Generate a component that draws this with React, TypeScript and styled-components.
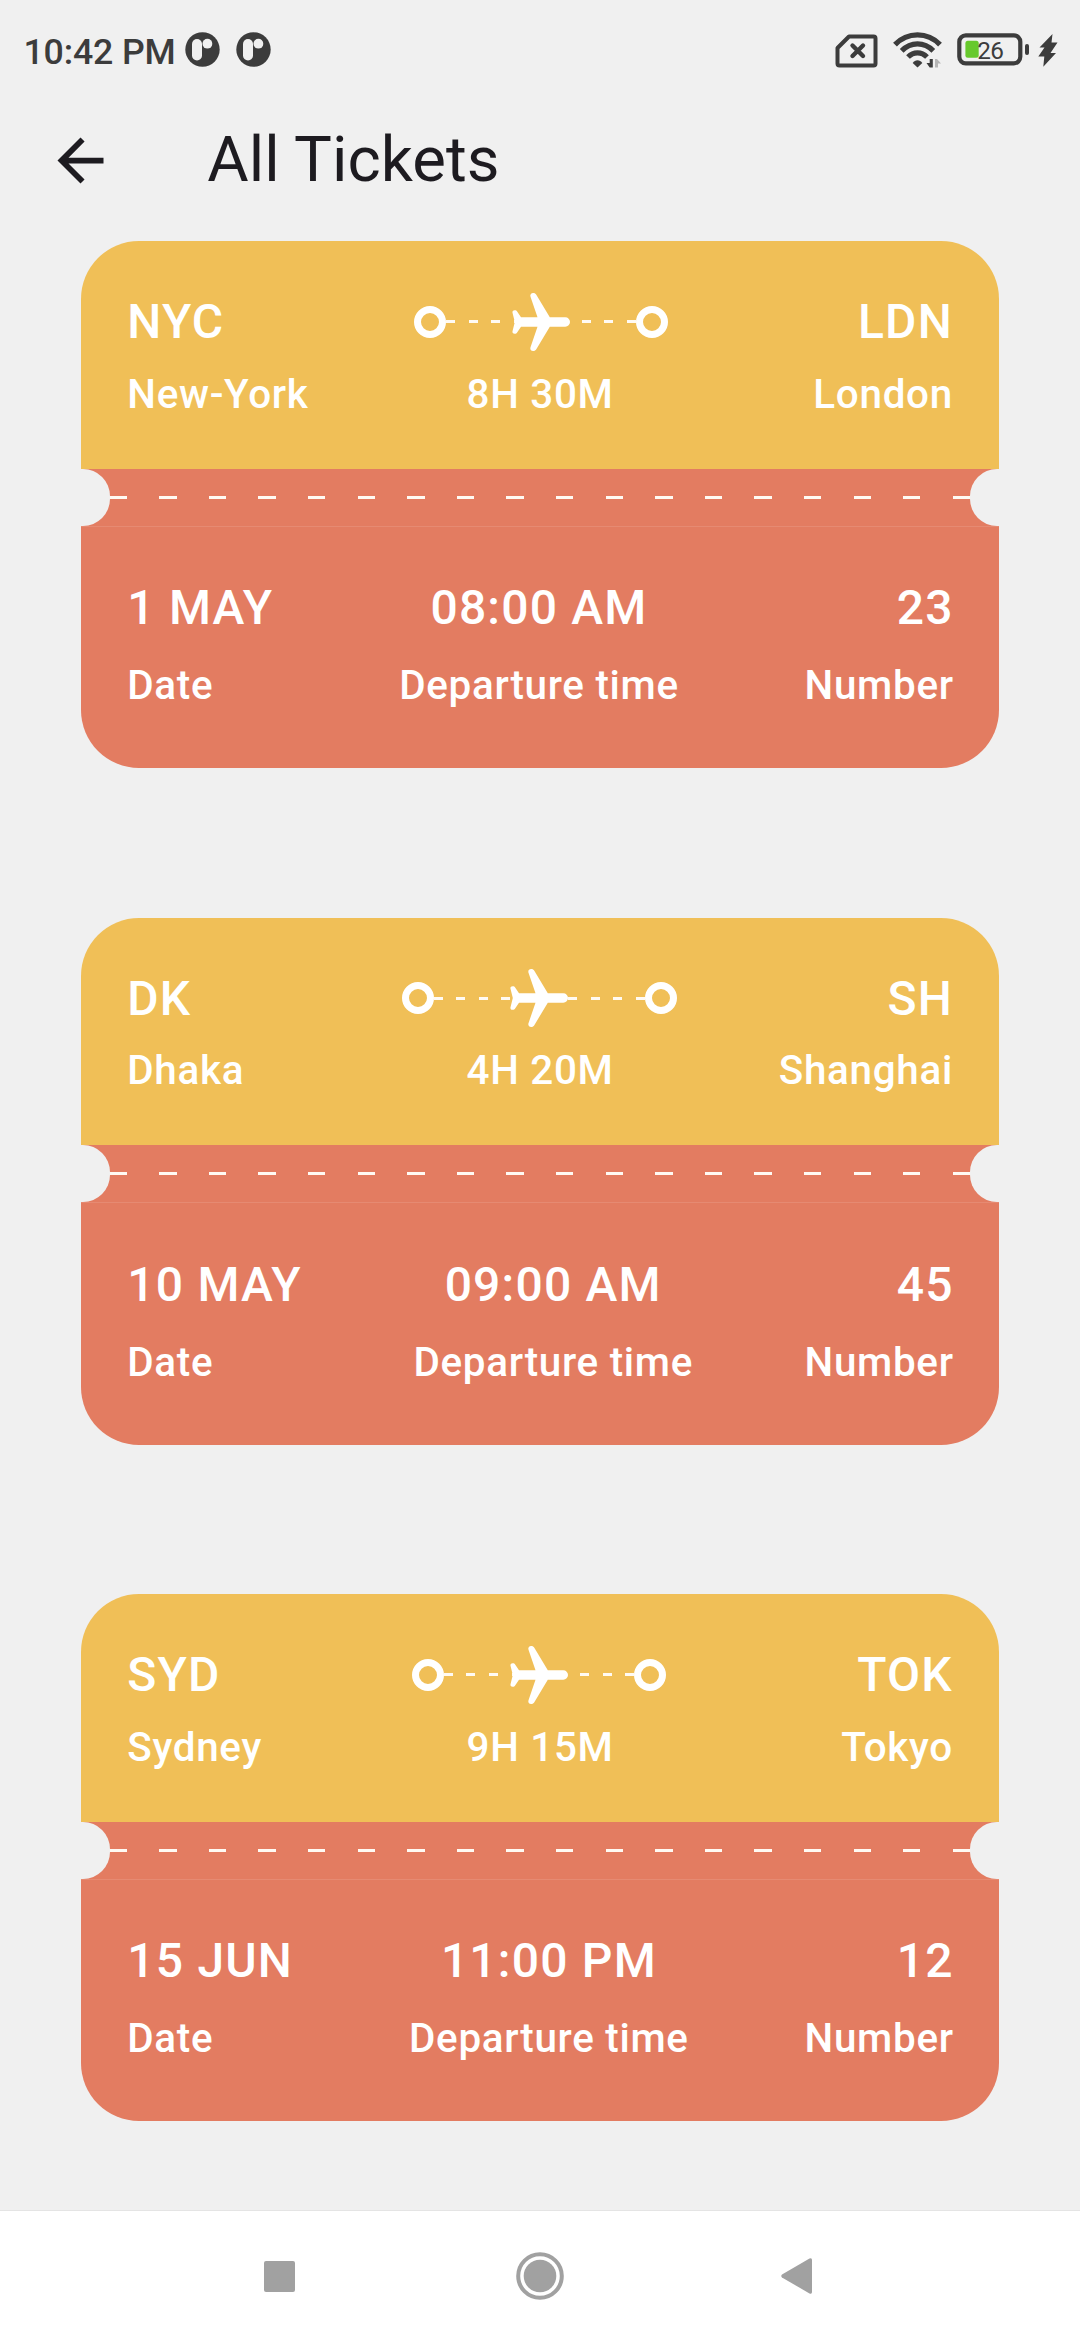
import React from 'react';
import styled, { createGlobalStyle } from 'styled-components';

const colors = {
  page: '#f0f0f0',
  yellow: '#f0bf57',
  coral: '#e37c61',
  seam: '#e68a72',
  status: '#3c3c3c',
  ink: '#1d1b20',
  nav: '#a1a1a1',
};

interface Ticket {
  from: string;
  fromName: string;
  to: string;
  toName: string;
  duration: string;
  date: string;
  time: string;
  number: string;
  dashes: number;
}

const tickets: Ticket[] = [
  { from: 'NYC', fromName: 'New-York', to: 'LDN', toName: 'London', duration: '8H 30M', date: '1 MAY', time: '08:00 AM', number: '23', dashes: 9 },
  { from: 'DK', fromName: 'Dhaka', to: 'SH', toName: 'Shanghai', duration: '4H 20M', date: '10 MAY', time: '09:00 AM', number: '45', dashes: 10 },
  { from: 'SYD', fromName: 'Sydney', to: 'TOK', toName: 'Tokyo', duration: '9H 15M', date: '15 JUN', time: '11:00 PM', number: '12', dashes: 9 },
];

const GlobalStyle = createGlobalStyle`
  * { box-sizing: border-box; }
  body {
    margin: 0;
    background: ${colors.page};
    font-family: Roboto, "Liberation Sans", sans-serif;
  }
`;

const Screen = styled.div`
  display: flex;
  flex-direction: column;
  width: 1080px;
  height: 2340px;
  overflow: hidden;
  background: ${colors.page};
`;

const StatusBar = styled.header`
  display: flex;
  justify-content: space-between;
  height: 100px;
  flex: none;
  padding: 0 22px 0 23.4px;
  color: ${colors.status};
`;

const StatusGroup = styled.div<{ $gap: number }>`
  display: flex;
  align-items: center;
  height: 100px;
  gap: ${(p) => p.$gap}px;
`;

const Clock = styled.span`
  width: 145.6px;
  font-size: 35.7px;
  line-height: 44px;
  font-weight: 500;
  letter-spacing: -0.15px;
  white-space: nowrap;
  padding-top: 3px;
`;

const Glyph = styled.svg<{ $drop?: number }>`
  display: block;
  flex: none;
  margin-top: ${(p) => (p.$drop ?? 0) * 2}px;
`;

const Power = styled.div`
  display: flex;
  align-items: center;
  gap: 8.6px;
`;

const AppBar = styled.div`
  display: flex;
  align-items: center;
  height: 120px;
  flex: none;
  padding-left: 46px;
`;

const Title = styled.h1`
  margin: 0 0 0 92.3px;
  color: ${colors.ink};
  font-size: 63.5px;
  line-height: 76px;
  font-weight: 400;
  white-space: nowrap;
`;

const List = styled.main`
  display: flex;
  flex-direction: column;
  flex: 1;
  gap: 149.7px;
  padding: 21.3px 81px 0;
`;

const Card = styled.article`
  display: flex;
  flex-direction: column;
  height: 526.8px;
  flex: none;
  color: #fff;
`;

const Route = styled.section`
  display: flex;
  flex-direction: column;
  gap: 16px;
  height: 227.4px;
  padding: 47.3px 46.1px 0 46.3px;
  border-radius: 58px 58px 0 0;
  background: ${colors.yellow};
`;

const RouteRow = styled.div`
  display: flex;
  align-items: center;
  height: 66px;
`;

const Strong = styled.span`
  padding-top: 1.4px;
  font-size: 48px;
  line-height: 56px;
  font-weight: 500;
  letter-spacing: 1.2px;
  white-space: nowrap;
`;

const Soft = styled.span`
  font-size: 40.4px;
  line-height: 48px;
  font-weight: 500;
  letter-spacing: 0.7px;
  white-space: nowrap;
`;

const Spacer = styled.div`
  flex: 1;
`;

const Ring = styled.div`
  width: 32px;
  height: 32px;
  flex: none;
  border: 7px solid #fff;
  border-radius: 50%;
`;

const Path = styled.div`
  position: relative;
  display: flex;
  flex: 1;
  align-items: center;
  justify-content: space-between;
`;

const Dash = styled.i<{ $w: number }>`
  width: ${(p) => p.$w}px;
  height: 3px;
  background: #fffaf3;
`;

const Plane = styled.svg`
  position: absolute;
  left: 50%;
  top: 50%;
  transform: translate(-50%, -50%);
`;

const NameRow = styled.div`
  display: grid;
  grid-template-columns: 1fr auto 1fr;

  & > :last-child {
    text-align: right;
  }
`;

const Perforation = styled.div`
  display: flex;
  align-items: center;
  justify-content: space-between;
  height: 57.3px;
  background: ${colors.coral};
`;

const Notch = styled.div<{ $side: 'left' | 'right' }>`
  width: 28.7px;
  height: 100%;
  background: ${colors.page};
  border-radius: ${(p) => (p.$side === 'left' ? '0 27px 27px 0' : '27px 0 0 27px')};
`;

const Dashes = styled.div`
  display: flex;
  flex: 1;
  justify-content: space-between;
`;

const Details = styled.section`
  display: flex;
  justify-content: space-between;
  flex: 1;
  padding: 51.8px 45.3px 0 46.3px;
  border-top: 1px solid ${colors.seam};
  border-radius: 0 0 58px 58px;
  background: ${colors.coral};
`;

const Detail = styled.div<{ $align: string }>`
  display: flex;
  flex-direction: column;
  align-items: ${(p) => p.$align};
  gap: 26px;
`;

const NavBar = styled.nav`
  display: flex;
  align-items: center;
  height: 130px;
  flex: none;
  padding: 1px 0 0 264px;
  border-top: 1px solid #e4e4e4;
  background: #fff;
`;

const NavButton = styled.div<{ $before?: number }>`
  margin-left: ${(p) => p.$before ?? 0}px;
`;

const NotificationIcon = () => (
  <Glyph $drop={-0.8} width="35" height="35" viewBox="0 0 35 35">
    <circle cx="17.5" cy="17.5" r="17.2" fill={colors.status} />
    <rect x="7" y="7" width="10" height="21.4" rx="5" fill={colors.page} />
    <circle cx="22.4" cy="11.7" r="4.9" fill={colors.page} />
  </Glyph>
);

const SimIcon = () => (
  <Glyph $drop={1} width="43" height="34" viewBox="0 0 43 34" fill="none" stroke={colors.status} strokeWidth="4">
    <path d="M14 2.5H38.5a2 2 0 0 1 2 2V29.5a2 2 0 0 1-2 2H4.5a2 2 0 0 1-2-2V14Z" strokeLinejoin="round" />
    <path d="M17.5 11.5L28 22M28 11.5L17.5 22" strokeLinecap="round" strokeWidth="4.4" />
  </Glyph>
);

const WifiIcon = () => (
  <Glyph width="49" height="36" viewBox="0 0 49 36" fill="none" stroke={colors.status}>
    <path d="M2 12.6C14.5-.4 34.5-.4 47 12.6" strokeWidth="5.3" />
    <path d="M8.700 18.900C17.800 9.600 31.200 9.600 40.300 18.900" strokeWidth="5.200" />
    <path d="M15 25C20.500 19.400 28.500 19.400 34 25" strokeWidth="5.200" />
    <path d="M24.500 35.500L19.700 31C22 27.200 27 27.200 29.300 31Z" fill={colors.status} stroke="none" />
    <path d="M39.800 27V35.500H36.700L33.500 31H36.700V27Z" fill={colors.status} stroke="none" />
    <path d="M42 35.500V27H44L48 31.500H45V35.500Z" fill="#b5b5b5" stroke="none" />
  </Glyph>
);

const BatteryIcon = () => (
  <Glyph $drop={-0.7} width="72" height="33" viewBox="0 0 72 33">
    <rect x="2.300" y="2.300" width="61" height="28" rx="6.500" fill="none" stroke={colors.status} strokeWidth="4.200" />
    <rect x="8.400" y="7.800" width="13.300" height="17" rx="2.500" fill="#67c92c" />
    <rect x="68" y="11" width="4" height="11" rx="2" fill={colors.status} />
    <text x="33.200" y="26" textAnchor="middle" fontFamily="Roboto, sans-serif" fontSize="24.300" letterSpacing="-0.6" fill={colors.status}>
      26
    </text>
  </Glyph>
);

const BoltIcon = () => (
  <Glyph width="20" height="33" viewBox="0 0 20 33">
    <path d="M14.500 0L1.500 13.500H6.500L.3 22.500H6.300L5.300 32.800L18 19H12.500L19.500 8.500H13.500Z" fill={colors.status} />
  </Glyph>
);

const PlaneIcon = () => (
  <Plane width="58" height="58" viewBox="0 0 58 58">
    <path
      fill="#fff"
      d="M25.500 24.300L18.500 3.800C17.800 1.800 19 0 21.200 0C22.600 0 23.600 .6 24.300 1.800L37.800 24.300H53.300A4.700 4.700 0 0 1 53.300 33.700H37.800L24.300 56.200C23.600 57.400 22.600 58 21.200 58C19 58 17.800 56.200 18.500 54.200L25.500 33.700H9L5.300 39.300C4.600 40.400 3.900 40.800 2.700 40.800C1 40.800 .2 39.800 .5 38.300L2.800 29L.5 19.700C.2 18.200 1 17.200 2.700 17.200C3.900 17.200 4.600 17.600 5.300 18.700L9 24.300Z"
    />
  </Plane>
);

const repeat = (count: number, width: number) =>
  Array.from({ length: count }, (_, i) => <Dash key={i} $w={width} />);

const TicketCard = ({ ticket }: { ticket: Ticket }) => (
  <Card>
    <Route>
      <RouteRow>
        <Strong>{ticket.from}</Strong>
        <Spacer />
        <Ring />
        <Path>
          {repeat(ticket.dashes, 9)}
          <PlaneIcon />
        </Path>
        <Ring />
        <Spacer />
        <Strong>{ticket.to}</Strong>
      </RouteRow>
      <NameRow>
        <Soft>{ticket.fromName}</Soft>
        <Soft>{ticket.duration}</Soft>
        <Soft>{ticket.toName}</Soft>
      </NameRow>
    </Route>
    <Perforation>
      <Notch $side="left" />
      <Dashes>{repeat(18, 17.3)}</Dashes>
      <Notch $side="right" />
    </Perforation>
    <Details>
      <Detail $align="flex-start">
        <Strong>{ticket.date}</Strong>
        <Soft>Date</Soft>
      </Detail>
      <Detail $align="center">
        <Strong>{ticket.time}</Strong>
        <Soft>Departure time</Soft>
      </Detail>
      <Detail $align="flex-end">
        <Strong>{ticket.number}</Strong>
        <Soft>Number</Soft>
      </Detail>
    </Details>
  </Card>
);

export default function App() {
  return (
    <Screen>
      <GlobalStyle />
      <StatusBar>
        <StatusGroup $gap={16}>
          <Clock>10:42 PM</Clock>
          <NotificationIcon />
          <NotificationIcon />
        </StatusGroup>
        <StatusGroup $gap={15}>
          <SimIcon />
          <WifiIcon />
          <Power>
            <BatteryIcon />
            <BoltIcon />
          </Power>
        </StatusGroup>
      </StatusBar>
      <AppBar>
        <Glyph width="69" height="69" viewBox="0 0 24 24" fill={colors.ink}>
          <path d="M20 11H7.830l5.590-5.590L12 4l-8 8 8 8 1.410-1.410L7.830 13H20v-2z" />
        </Glyph>
        <Title>All Tickets</Title>
      </AppBar>
      <List>
        {tickets.map((ticket) => (
          <TicketCard key={ticket.from} ticket={ticket} />
        ))}
      </List>
      <NavBar>
        <NavButton>
          <Glyph width="31" height="31" viewBox="0 0 31 31">
            <rect width="31" height="31" rx="2" fill={colors.nav} />
          </Glyph>
        </NavButton>
        <NavButton $before={221}>
          <Glyph width="48" height="48" viewBox="0 0 48 48" fill={colors.nav}>
            <circle cx="24" cy="24" r="16.300" />
            <circle cx="24" cy="24" r="21.800" fill="none" stroke={colors.nav} strokeWidth="4" />
          </Glyph>
        </NavButton>
        <NavButton $before={216.6}>
          <Glyph width="32" height="36" viewBox="0 0 32 36">
            <path d="M1 16.600L28.500 .5Q31 -.5 31 2V34Q31 36.500 28.500 35.500L1 19.400Q-.5 18 1 16.600Z" fill={colors.nav} />
          </Glyph>
        </NavButton>
      </NavBar>
    </Screen>
  );
}
